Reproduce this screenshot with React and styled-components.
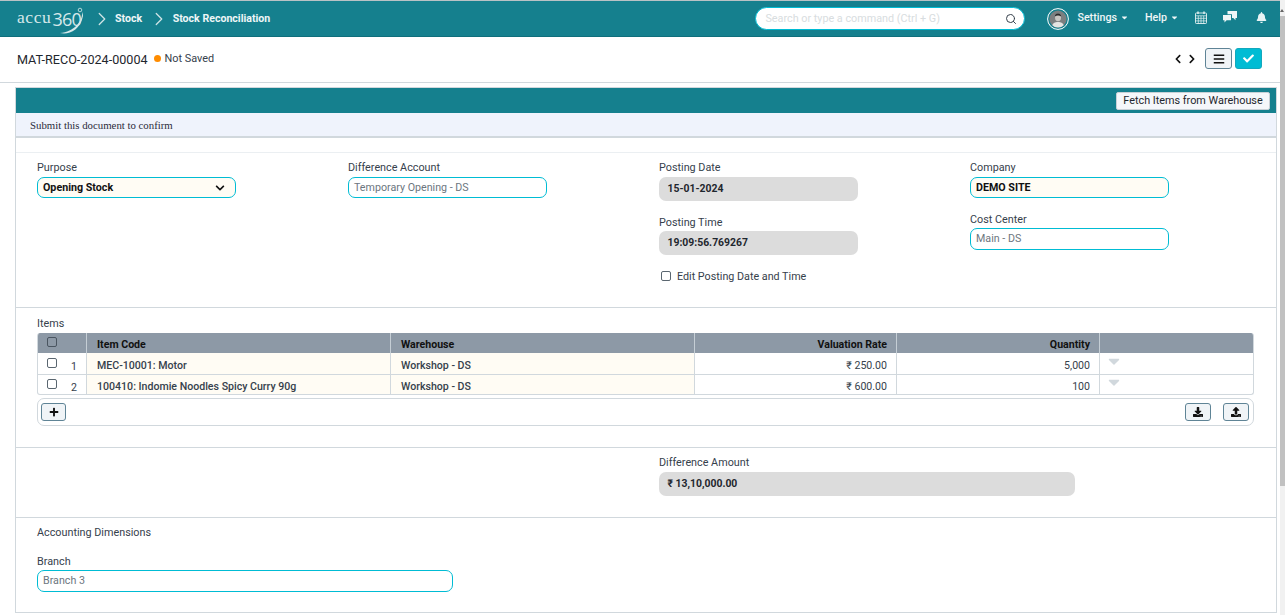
import React from "react";
import styled, { createGlobalStyle } from "styled-components";
import { FaCheck, FaBars, FaPlus, FaDownload, FaUpload, FaBell, FaChevronLeft, FaChevronRight, FaChevronDown, FaCaretDown } from "react-icons/fa";
import { LuChevronRight, LuSearch } from "react-icons/lu";

const Global = createGlobalStyle`
	html, body {
		margin: 0;
		height: 100%;
		overflow: hidden;
		background: #fff;
		font-family: Roboto, "Liberation Sans", sans-serif;
		font-size: 12px;
		color: #36414c;
	}
	* { box-sizing: border-box; }
`;

const Page = styled.div`
	position: relative;
	width: 1285px;
	height: 615px;
	overflow: hidden;
`;

const Navbar = styled.div`
	height: 37px;
	background: #15808e;
	border-top: 1px solid #b9c2c5;
	border-bottom: 1px solid #0f6f7c;
	display: flex;
	align-items: center;
	padding: 0 13px 0 17px;
	margin-right: 5px;
	color: #fff;
`;

const Logo = styled.div`
	display: flex;
	align-items: flex-start;
	width: 68px;
	height: 30px;
	position: relative;
	color: #d5e8ea;
	font-family: "Liberation Serif", serif;
	font-size: 17.5px;
	letter-spacing: 0.6px;
	line-height: 30px;
	margin-top: -4px;
`;

const LogoNum = styled.span`
	font-family: "Open Sans", sans-serif;
	font-size: 18px;
	letter-spacing: -0.8px;
	margin-left: 1px;
	margin-top: 2px;
`;

const LogoSwoosh = styled.svg`
	position: absolute;
	left: 40px;
	top: 3px;
`;

const Crumb = styled.span`
	font-weight: 700;
	font-size: 10.6px;
	color: #eef6f7;
	margin-left: 2.5px;
`;

const CrumbArrow = styled(LuChevronRight)`
	color: #cfe3e6;
	font-size: 22px;
	stroke-width: 1.4;
	margin-left: ${(p) => p.$left}px;
	flex: none;
`;

const SearchBox = styled.div`
	margin-left: auto;
	width: 270px;
	height: 23px;
	border: 1.5px solid #00bcd4;
	border-radius: 12px;
	background: #fff;
	display: flex;
	align-items: center;
	justify-content: space-between;
	padding: 0 7px 0 9px;
	font-size: 10.8px;
	color: #d8dde0;
`;

const SearchIcon = styled(LuSearch)`
	color: #36414c;
	font-size: 12px;
`;

const Avatar = styled.svg`
	margin-left: 22px;
	flex: none;
`;

const NavLink = styled.span`
	display: flex;
	align-items: center;
	gap: 3px;
	font-size: 10.7px;
	font-weight: 500;
	color: #eef6f7;
	margin-left: ${(p) => p.$left}px;
	margin-top: -2px;
`;

const NavIcon = styled.span`
	display: flex;
	font-size: ${(p) => p.$size}px;
	color: #e8f3f4;
	margin-left: ${(p) => p.$left}px;
	margin-top: -3px;
`;

const PageHead = styled.div`
	height: 46px;
	border-bottom: 1px solid #d1d8dd;
	display: flex;
	align-items: center;
	padding: 0 18px 0 17px;
	margin-right: 5px;
`;

const DocTitle = styled.div`
	font-size: 12.6px;
	color: #1f272e;
`;

const Indicator = styled.div`
	display: flex;
	align-items: center;
	gap: 4px;
	font-size: 10.9px;
	color: #36414c;
	margin: -3px 0 0 6px;
	&::before {
		content: "";
		width: 7px;
		height: 7px;
		border-radius: 50%;
		background: #ff8c00;
	}
`;

const HeadActions = styled.div`
	margin-left: auto;
	display: flex;
	align-items: center;
	margin-top: -2px;
`;

const Pager = styled.div`
	display: flex;
	gap: 4px;
	font-size: 10px;
	color: #111;
	margin-right: 8px;
`;

const IconButton = styled.div`
	width: ${(p) => p.$w || 27}px;
	height: ${(p) => p.$h || 21}px;
	border-radius: 3px;
	border: 1px solid ${(p) => (p.$primary ? "#13a8bd" : "#5f8496")};
	background: ${(p) => (p.$primary ? "#00bcd4" : "#f0f4f7")};
	color: ${(p) => (p.$primary ? "#fff" : "#111")};
	display: flex;
	align-items: center;
	justify-content: center;
	font-size: ${(p) => p.$icon || 10}px;
	margin-left: ${(p) => p.$left || 0}px;
`;

const Layout = styled.div`
	margin: 4px 8px 0 15px;
	border: 1px solid #d1d8dd;
`;

const ActionBar = styled.div`
	height: 25px;
	background: #15808e;
	display: flex;
	align-items: center;
	justify-content: flex-end;
	padding-right: 6px;
`;

const FetchButton = styled.div`
	height: 18px;
	width: 154px;
	border-radius: 2px;
	background: #f5f7fa;
	border: 1px solid #c8d0d6;
	color: #1f272e;
	font-size: 10.85px;
	display: flex;
	align-items: center;
	justify-content: center;
`;

const Message = styled.div`
	height: 25px;
	background: #eff3fc;
	border-bottom: 2px solid #d1d8dd;
	padding: 1px 0 0 14px;
	display: flex;
	align-items: center;
	font-family: "Liberation Serif", serif;
	font-size: 10.8px;
	color: #2b2b3a;
`;

const Section = styled.div`
	padding: ${(p) => p.$pad || "0 21px"};
	height: ${(p) => p.$h}px;
	border-top: 1px solid ${(p) => p.$line || "#d1d8dd"};
`;

const Gap = styled.div`
	height: 14px;
`;

const FormGrid = styled.div`
	display: grid;
	grid-template-columns: repeat(4, 311px);
`;

const Column = styled.div`
	display: flex;
	flex-direction: column;
	align-items: flex-start;
`;

const Label = styled.label`
	font-size: 10.8px;
	line-height: 13px;
	color: #36414c;
	display: block;
	margin-top: ${(p) => p.$top || 0}px;
	margin-bottom: ${(p) => p.$bottom ?? 3}px;
`;

const Input = styled.div`
	width: ${(p) => p.$w || 199}px;
	height: ${(p) => p.$h || 21}px;
	border-radius: 7px;
	border: 1px solid #00bcd4;
	background: ${(p) => (p.$req ? "#fffcf4" : "#fff")};
	color: ${(p) => (p.$req ? "#111" : "#6c7680")};
	font-weight: ${(p) => (p.$req ? 700 : 400)};
	font-size: 10.7px;
	padding: 0 5px ${(p) => (p.$h ? 2 : 0)}px;
	display: flex;
	align-items: center;
	justify-content: space-between;
`;

const SelectArrow = styled(FaChevronDown)`
	color: #111;
	font-size: 10px;
	margin: 1px 5px 0 0;
`;

const ReadOnly = styled.div`
	width: ${(p) => p.$w || 199}px;
	height: 24px;
	border-radius: 7px;
	background: #dcdcdc;
	color: #1f272e;
	font-weight: 700;
	font-size: 10.4px;
	padding: 0 9px 1px 8.5px;
	display: flex;
	align-items: center;
`;

const Check = styled.span`
	width: 10px;
	height: 10px;
	border: 1px solid ${(p) => (p.$dark ? "#4a5560" : "#5a6670")};
	border-radius: 2px;
	background: ${(p) => (p.$dark ? "transparent" : "#fff")};
	display: inline-block;
	flex: none;
`;

const CheckRow = styled.div`
	display: flex;
	align-items: center;
	gap: 6px;
	font-size: 10.75px;
	color: #36414c;
	margin: 15px 0 0 2px;
	${Check} {
		margin-top: -1px;
	}
`;

const Grid = styled.div`
	width: 1217px;
	border-bottom: 1px solid #d1d8dd;
	border-left: 1px solid #d1d8dd;
	border-right: 1px solid #d1d8dd;
	border-radius: 3px;
	overflow: hidden;
`;

const GridRow = styled.div`
	display: grid;
	grid-template-columns: 48px 304px 304px 202px 203px 1fr;
	height: ${(p) => p.$h}px;
	background: ${(p) => (p.$head ? "#8d99a6" : "transparent")};
	border-top: ${(p) => (p.$divided ? "1px solid #d1d8dd" : "none")};
`;

const Cell = styled.div`
	display: flex;
	align-items: center;
	justify-content: ${(p) => (p.$right ? "flex-end" : "flex-start")};
	padding: ${(p) => (p.$first ? "2px 0 0 9px" : p.$head ? "2px 9px 0 10px" : "4px 9px 0 10px")};
	border-left: ${(p) => (p.$first ? "none" : `1px solid ${p.$head ? "#c5ced5" : "#d1d8dd"}`)};
	background: ${(p) => (p.$req ? "#fffcf4" : "transparent")};
	font-size: 10.6px;
	font-weight: ${(p) => (p.$head ? 700 : p.$bold ? 500 : 400)};
	color: ${(p) => (p.$head ? "#111" : "#36414c")};
`;

const RowIdx = styled.span`
	margin-left: 14px;
	margin-top: 3px;
	color: #36414c;
`;

const RowCheck = styled(Check)`
	margin-top: -4px;
`;

const RowCaret = styled(FaCaretDown)`
	color: #d1d8dd;
	font-size: 18px;
	margin: -9px 0 0 -5px;
`;

const GridFooter = styled.div`
	width: 1217px;
	height: 28px;
	margin-top: 3px;
	border: 1px solid #d1d8dd;
	border-radius: 7px;
	display: flex;
	align-items: center;
	padding: 0 4px 0 3px;
	gap: 12px;
`;

const FooterSpacer = styled.div`
	flex: 1;
`;

const Scrollbar = styled.div`
	position: absolute;
	right: 0;
	top: 0;
	bottom: 0;
	width: 5px;
	background: #f1f1f1;
	&::before {
		content: "";
		position: absolute;
		left: 0;
		top: 9px;
		border-left: 2.5px solid transparent;
		border-right: 2.5px solid transparent;
		border-bottom: 3px solid #666;
	}
	&::after {
		content: "";
		position: absolute;
		left: 0;
		right: 0;
		top: 16px;
		height: 470px;
		background: #c1c1c1;
	}
`;

const Offset = styled.div`
	margin-left: ${(p) => p.$left}px;
`;

const SectionTitle = styled.div`
	font-size: 10.8px;
	line-height: 13px;
	color: #36414c;
`;

function App() {
	const columns = ["Item Code", "Warehouse"];
	const rows = [
		{ idx: 1, code: "MEC-10001: Motor", rate: "₹ 250.00", qty: "5,000", h: 21 },
		{ idx: 2, code: "100410: Indomie Noodles Spicy Curry 90g", rate: "₹ 600.00", qty: "100", h: 20 },
	];

	return (
		<Page>
			<Global />
			<Navbar>
				<Logo>
					accu<LogoNum>360</LogoNum>
					<LogoSwoosh width="30" height="30" viewBox="0 0 30 30" fill="none">
						<path d="M3 28c8 2 20-2 23-17 0-2-.5-3-1-4 1 9-8 20-22 21z" fill="#d5e8ea" />
						<circle cx="23" cy="5" r="1.8" stroke="#d5e8ea" strokeWidth="0.8" />
					</LogoSwoosh>
				</Logo>
				<CrumbArrow $left={5.5} />
				<Crumb>Stock</Crumb>
				<CrumbArrow $left={6} />
				<Crumb>Stock Reconciliation</Crumb>
				<SearchBox>
					Search or type a command (Ctrl + G)
					<SearchIcon />
				</SearchBox>
				<Avatar width="22" height="22" viewBox="0 0 22 22">
					<defs>
						<clipPath id="face">
							<circle cx="11" cy="11" r="8.6" />
						</clipPath>
					</defs>
					<circle cx="11" cy="11" r="10.4" fill="none" stroke="#fff" strokeWidth="1" />
					<g clipPath="url(#face)">
						<rect width="22" height="22" fill="#7c7f80" />
						<path d="M4 21c1-6 4-7 7-7s6 1 7 7z" fill="#e4e4e2" />
						<ellipse cx="11" cy="9.5" rx="3" ry="3.8" fill="#c9c7c3" />
						<path d="M7.8 8.5c0-4 6.4-4 6.4 0-2-1.2-4.400-1.200-6.400 0z" fill="#2c2c2c" />
					</g>
				</Avatar>
				<NavLink $left={8}>
					Settings <FaCaretDown size={9} />
				</NavLink>
				<NavLink $left={16}>
					Help <FaCaretDown size={9} />
				</NavLink>
				<NavIcon $left={16}>
					<svg width="12" height="13" viewBox="0 0 12 13" fill="none" stroke="#e8f3f4" strokeWidth="0.9">
						<rect x="0.5" y="2" width="11" height="10.500" rx="0.8" />
						<path d="M0.500 4.800h11M0.500 7.300h11M0.500 9.900h11M3.300 4.800v7.700M6 4.800v7.700M8.700 4.800v7.700" strokeWidth="0.7" />
						<path d="M3 0.500v2.500M9 0.500v2.500" strokeWidth="1.400" />
					</svg>
				</NavIcon>
				<NavIcon $left={16}>
					<svg width="14" height="12" viewBox="0 0 14 12" fill="#eef6f7">
						<path d="M4.500 0h9.500v7h-1.500v2.200L10.300 7H9V3.300H4.500z" />
						<path d="M0 4h8v5.300H3.600L1.500 11.500V9.300H0z" />
					</svg>
				</NavIcon>
				<NavIcon $size={11} $left={19}>
					<FaBell />
				</NavIcon>
			</Navbar>

			<PageHead>
				<DocTitle>MAT-RECO-2024-00004</DocTitle>
				<Indicator>Not Saved</Indicator>
				<HeadActions>
					<Pager>
						<FaChevronLeft />
						<FaChevronRight />
					</Pager>
					<IconButton $icon={12}>
						<FaBars />
					</IconButton>
					<IconButton $primary $left={3} $icon={11}>
						<FaCheck />
					</IconButton>
				</HeadActions>
			</PageHead>

			<Layout>
				<ActionBar>
					<FetchButton>Fetch Items from Warehouse</FetchButton>
				</ActionBar>
				<Message>Submit this document to confirm</Message>
				<Gap />
				<Section $h={155} $line="#ebeff2" $pad="8px 21px 0">
					<FormGrid>
						<Column>
							<Label>Purpose</Label>
							<Input $req>
								Opening Stock
								<SelectArrow />
							</Input>
						</Column>
						<Column>
							<Label>Difference Account</Label>
							<Input>Temporary Opening - DS</Input>
						</Column>
						<Column>
							<Label>Posting Date</Label>
							<ReadOnly>15-01-2024</ReadOnly>
							<Label $top={15} $bottom={2}>
								Posting Time
							</Label>
							<ReadOnly>19:09:56.769267</ReadOnly>
							<CheckRow>
								<Check />
								Edit Posting Date and Time
							</CheckRow>
						</Column>
						<Column>
							<Label>Company</Label>
							<Input $req>DEMO SITE</Input>
							<Label $top={15} $bottom={2}>
								Cost Center
							</Label>
							<Input $h={22}>Main - DS</Input>
						</Column>
					</FormGrid>
				</Section>
				<Section $h={140} $pad="9px 21px 0">
					<Label>Items</Label>
					<Grid>
						<GridRow $head $h={20}>
							<Cell $first $head>
								<RowCheck $dark />
							</Cell>
							{columns.map((c) => (
								<Cell $head key={c}>
									{c}
								</Cell>
							))}
							<Cell $head $right>
								Valuation Rate
							</Cell>
							<Cell $head $right>
								Quantity
							</Cell>
							<Cell $head />
						</GridRow>
						{rows.map((r) => (
							<GridRow key={r.idx} $h={r.h} $divided={r.idx > 1}>
								<Cell $first>
									<RowCheck />
									<RowIdx>{r.idx}</RowIdx>
								</Cell>
								<Cell $req $bold>
									{r.code}
								</Cell>
								<Cell $req $bold>
									Workshop - DS
								</Cell>
								<Cell $right>{r.rate}</Cell>
								<Cell $right>{r.qty}</Cell>
								<Cell>
									<RowCaret />
								</Cell>
							</GridRow>
						))}
					</Grid>
					<GridFooter>
						<IconButton $w={25} $h={18}>
							<FaPlus />
						</IconButton>
						<FooterSpacer />
						<IconButton $w={26} $h={18}>
							<FaDownload />
						</IconButton>
						<IconButton $w={26} $h={18}>
							<FaUpload />
						</IconButton>
					</GridFooter>
				</Section>
				<Section $h={70} $pad="8px 21px 0">
					<Offset $left={622}>
						<Label $bottom={3}>Difference Amount</Label>
						<ReadOnly $w={416}>₹ 13,10,000.00</ReadOnly>
					</Offset>
				</Section>
				<Section $h={95} $pad="8px 21px 0">
					<SectionTitle>Accounting Dimensions</SectionTitle>
					<Label $top={16} $bottom={2}>
						Branch
					</Label>
					<Input $w={416} $h={22}>
						Branch 3
					</Input>
				</Section>
			</Layout>
			<Scrollbar />
		</Page>
	);
}

export default App;
